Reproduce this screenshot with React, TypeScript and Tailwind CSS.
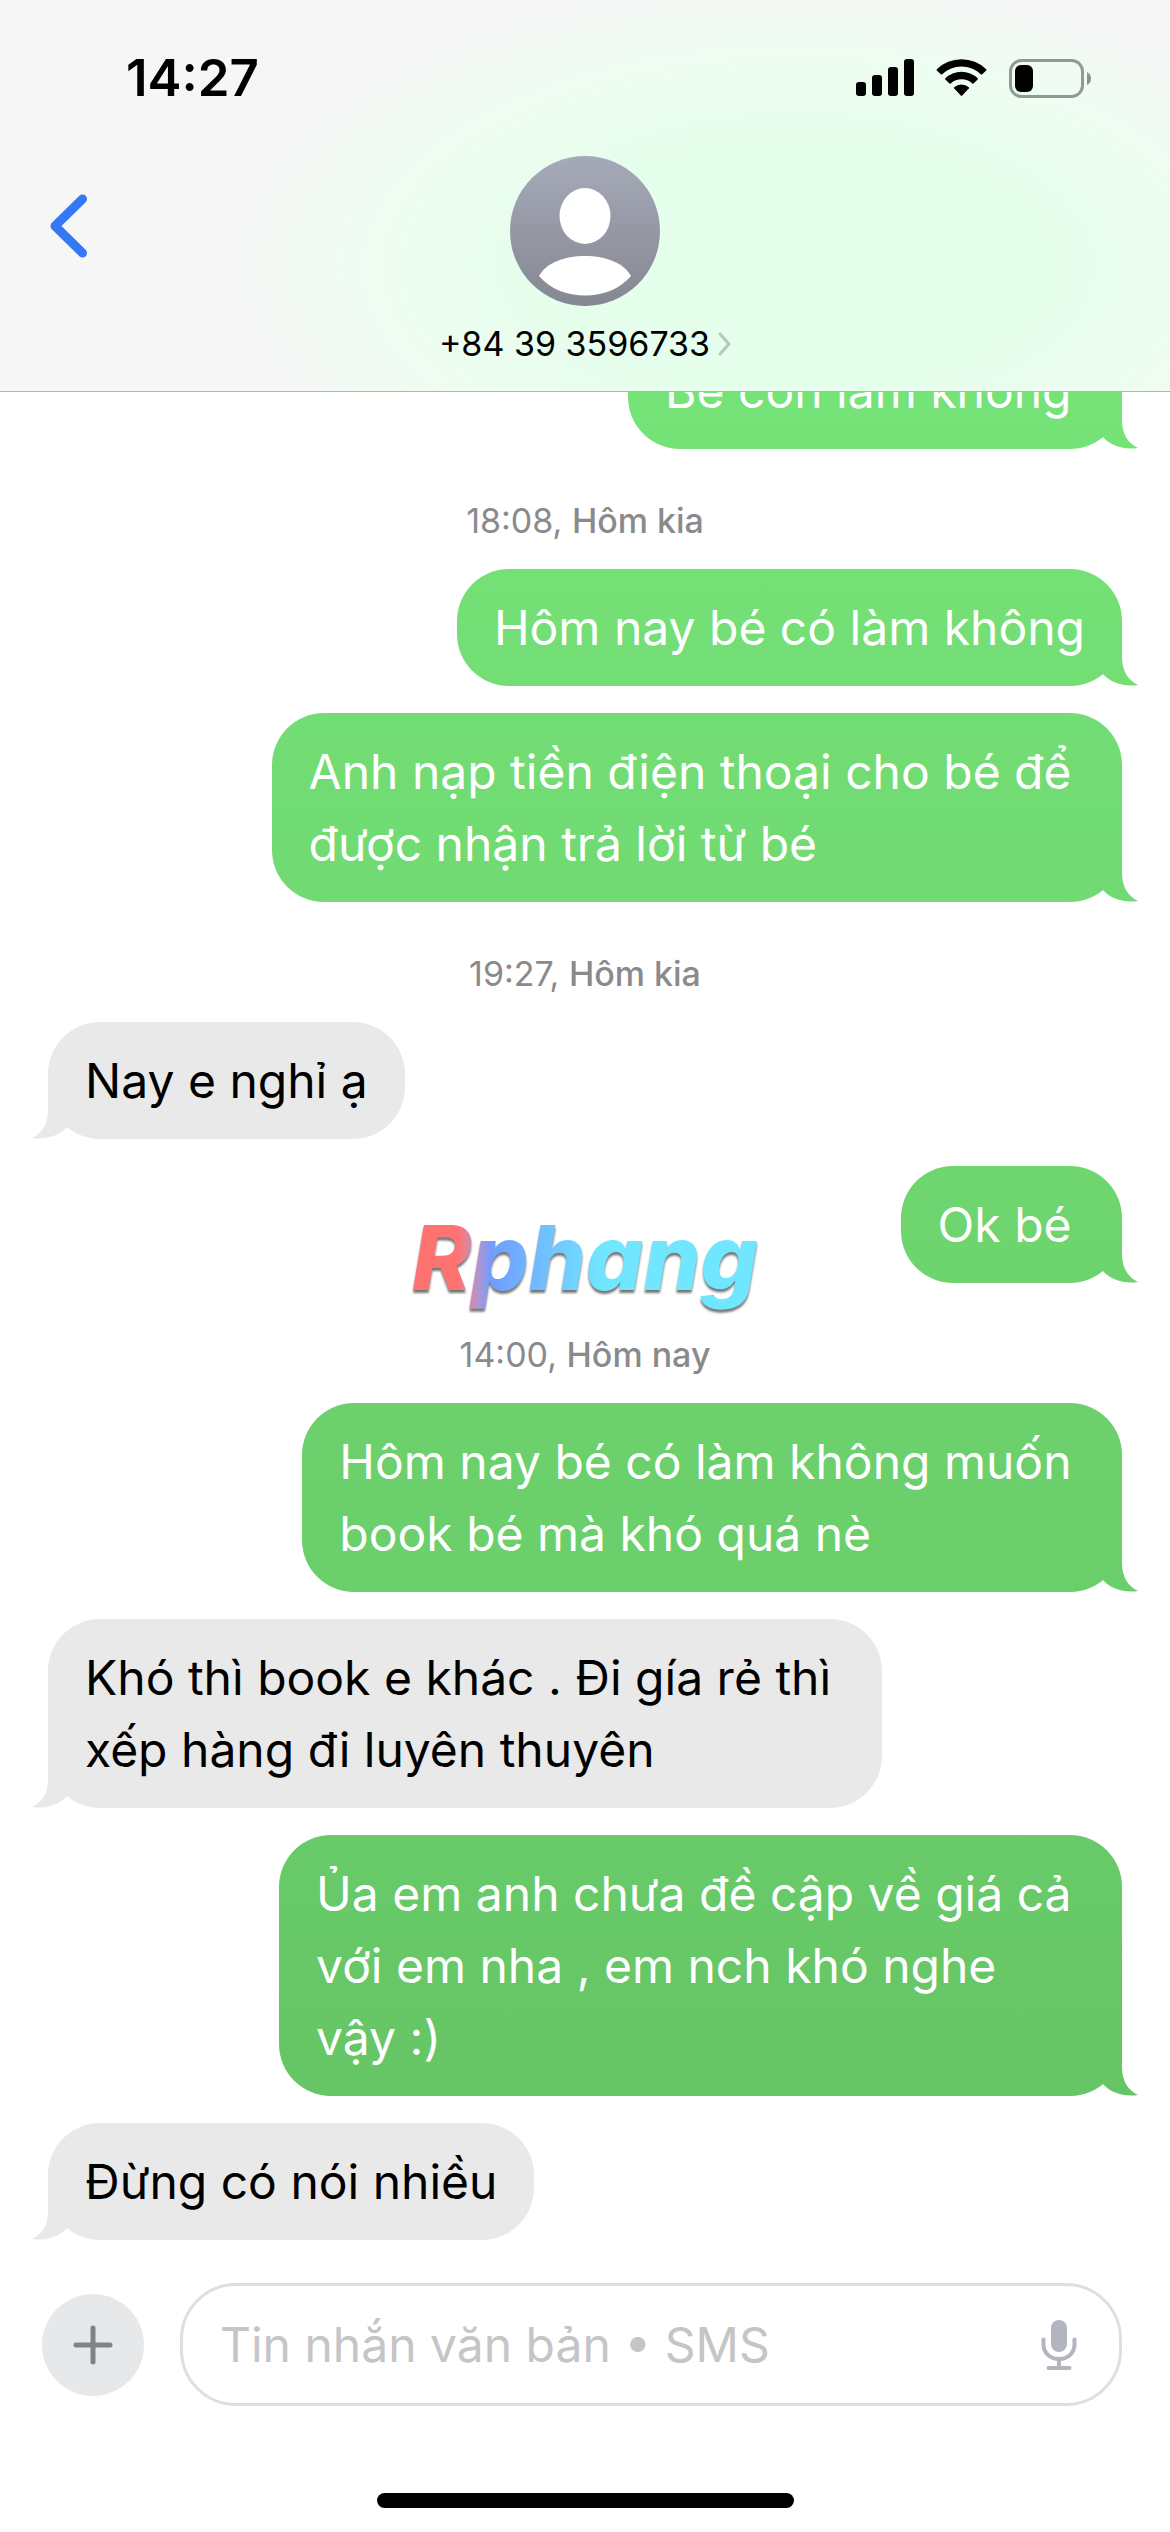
import { Fragment } from 'react';
import clsx from 'clsx';

type Item =
  | { kind: 'time'; time: string; day: string }
  | { kind: 'message'; from: 'me' | 'them'; text: string };

// Messages keep the trailing space and the line breaks they were sent with
const THREAD: Item[] = [
  { kind: 'message', from: 'me', text: 'Bé còn làm không ' },
  { kind: 'time', time: '18:08', day: 'Hôm kia' },
  { kind: 'message', from: 'me', text: 'Hôm nay bé có làm không' },
  { kind: 'message', from: 'me', text: 'Anh nạp tiền điện thoại cho bé để \nđược nhận trả lời từ bé' },
  { kind: 'time', time: '19:27', day: 'Hôm kia' },
  { kind: 'message', from: 'them', text: 'Nay e nghỉ ạ' },
  { kind: 'message', from: 'me', text: 'Ok bé ' },
  { kind: 'time', time: '14:00', day: 'Hôm nay' },
  { kind: 'message', from: 'me', text: 'Hôm nay bé có làm không muốn \nbook bé mà khó quá nè' },
  { kind: 'message', from: 'them', text: 'Khó thì book e khác . Đi gía rẻ thì \nxếp hàng đi luyên thuyên' },
  { kind: 'message', from: 'me', text: 'Ủa em anh chưa đề cập về giá cả \nvới em nha , em nch khó nghe\nvậy :)' },
  { kind: 'message', from: 'them', text: 'Đừng có nói nhiều' },
];

function StatusBar() {
  return (
    <div className="flex h-[60px] items-center justify-between pl-[126px] pr-[79px]">
      <span className="text-[51px] font-semibold leading-[60px]">14:27</span>
      <div className="flex items-center gap-[22px]">
        <svg width="58" height="38" viewBox="0 0 58 38" aria-label="Signal">
          <rect x="0" y="23" width="10" height="14" rx="3" />
          <rect x="16" y="16" width="10" height="21" rx="3" />
          <rect x="32" y="8" width="10" height="29" rx="3" />
          <rect x="48" y="0" width="10" height="37" rx="3" />
        </svg>
        <svg width="51" height="38" viewBox="0 0 51 38" aria-label="Wi-Fi">
          <path d="M0.8 10.2 A35.5 35.5 0 0 1 50.2 10.2 Q50.6 10.8 50.2 11.4 L46 15.4 Q45.4 15.8 44.8 15.3 A28 28 0 0 0 6.2 15.3 Q5.6 15.8 5 15.4 L0.8 11.4 Q0.4 10.8 0.8 10.2 Z" />
          <path d="M9.3 19.2 A23.5 23.5 0 0 1 41.7 19.2 Q42.1 19.8 41.7 20.4 L37.5 24.5 Q36.9 25 36.3 24.5 A16 16 0 0 0 14.7 24.5 Q14.1 25 13.5 24.5 L9.3 20.4 Q8.9 19.8 9.3 19.2 Z" />
          <path d="M18.2 28.2 A11.5 11.5 0 0 1 32.8 28.2 Q33.2 28.8 32.8 29.4 L26.2 36.6 Q25.5 37.2 24.8 36.6 L18.2 29.4 Q17.8 28.8 18.2 28.2 Z" />
        </svg>
        <svg width="82" height="39" viewBox="0 0 82 39" aria-label="Battery">
          <rect x="1.5" y="1.5" width="72" height="36" rx="11" fill="none" stroke="#919993" strokeWidth="3" />
          <rect x="6" y="6" width="18" height="27" rx="6" />
          <path d="M78 13 Q82 15 82 19.5 Q82 24 78 26 Z" fill="#8c948e" />
        </svg>
      </div>
    </div>
  );
}

function Avatar() {
  return (
    <svg width="150" height="150" viewBox="0 0 150 150" aria-hidden="true">
      <defs>
        <linearGradient id="avatar-fill" x1="0" y1="0" x2="0" y2="1">
          <stop offset="0" stopColor="#a6aab8" />
          <stop offset="1" stopColor="#858791" />
        </linearGradient>
      </defs>
      <circle cx="75" cy="75" r="75" fill="url(#avatar-fill)" />
      <ellipse cx="75" cy="60" rx="25.5" ry="28" fill="#fff" />
      <path d="M29 120 C36 107 54 100 75 100 C96 100 114 107 121 120 C110 133 93 139.500 75 139.500 C57 139.500 40 133 29 120 Z" fill="#fff" />
    </svg>
  );
}

function Header() {
  return (
    <header className="shrink-0 border-b border-[#b2b5b2] bg-[#f6f6f6] bg-[radial-gradient(ellipse_50%_76%_at_68%_68%,#e5feec_0%,#e6feec_45%,#eefdf1_70%,#f6f6f6_100%)] pb-[27px] pt-12">
      <StatusBar />
      <div className="mt-12 grid grid-cols-[1fr_auto_1fr] items-start">
        <button type="button" aria-label="Quay lại" className="mt-[38px] justify-self-start pl-12">
          <svg width="42" height="64" viewBox="0 0 42 64" fill="none" stroke="#3478f6" strokeWidth="9" strokeLinecap="round" strokeLinejoin="round">
            <path d="M34.500 5 L7 32 L34.500 59" />
          </svg>
        </button>
        <button type="button" className="flex flex-col items-center gap-[18px]">
          <Avatar />
          <span className="flex items-center gap-2 text-[34px] leading-10">
            +84 39 3596733
            <svg width="13" height="26" viewBox="0 0 13 26" fill="none" stroke="#b7c6bb" strokeWidth="3" strokeLinecap="round" strokeLinejoin="round">
              <path d="M2 3 L11 13 L2 23" />
            </svg>
          </span>
        </button>
      </div>
    </header>
  );
}

// The green runs over the whole window, so bubbles darken as they move down
const GREEN = 'bg-fixed bg-linear-to-b from-[#79ea7c] to-[#62be61]';
const GRAY = 'bg-[#e9e9e9]';

function Bubble({ from, text }: { from: 'me' | 'them'; text: string }) {
  const mine = from === 'me';
  const fill = mine ? GREEN : GRAY;
  return (
    <div
      className={clsx(
        'relative w-fit max-w-[84%] shrink-0 rounded-[52px] px-[37px] pb-[22px] pt-[23px]',
        fill,
        mine ? 'self-end text-white' : 'self-start text-black',
      )}
    >
      <p className="whitespace-break-spaces text-5xl leading-[72px]">{text}</p>
      <span
        className={clsx(
          'absolute bottom-0 h-14 w-[52px]',
          fill,
          mine
            ? "right-[-16px] [clip-path:path('M17_44_C25_53_38_57_52_55_C42_50_36_41_36_27_L36_0_L0_0_L6_30_Z')]"
            : "left-[-16px] [clip-path:path('M35_44_C27_53_14_57_0_55_C10_50_16_41_16_27_L16_0_L52_0_L46_30_Z')]",
        )}
      />
    </div>
  );
}

function Thread() {
  return (
    <main className="flex min-h-0 flex-1 flex-col justify-end overflow-hidden px-12">
      {THREAD.map((item, i) => {
        if (item.kind === 'time') {
          return (
            <p key={i} className="shrink-0 pb-[30px] pt-[54px] text-center text-[34px] leading-9 text-[#8a8a8d]">
              {item.time}, <span className="font-medium">{item.day}</span>
            </p>
          );
        }
        const afterMessage = i > 0 && THREAD[i - 1].kind === 'message';
        return (
          <Fragment key={i}>
            {afterMessage && <div className="h-[27px] shrink-0" />}
            <Bubble from={item.from} text={item.text} />
          </Fragment>
        );
      })}
    </main>
  );
}

function Composer() {
  return (
    <footer className="shrink-0 pb-6 pt-[43px]">
      <form className="flex items-center gap-9 pl-[42px] pr-12" onSubmit={(e) => e.preventDefault()}>
        <button type="button" aria-label="Thêm" className="flex size-[102px] shrink-0 items-center justify-center rounded-full bg-[#e6e8ea]">
          <svg width="40" height="40" viewBox="0 0 40 40" stroke="#808287" strokeWidth="5" strokeLinecap="round">
            <path d="M20 3 V37 M3 20 H37" />
          </svg>
        </button>
        <div className="flex h-[123px] min-w-0 flex-1 items-center rounded-[56px] border-[3px] border-[#dfdfdf] pl-[37px] pr-[42px]">
          <input
            type="text"
            aria-label="Tin nhắn văn bản"
            placeholder="Tin nhắn văn bản • SMS"
            className="h-[72px] min-w-0 flex-1 bg-transparent text-5xl leading-[72px] outline-none placeholder:text-[#c5c5c5]"
          />
          <button type="button" aria-label="Đọc chính tả">
            <svg width="36" height="50" viewBox="0 0 36 50" fill="none" stroke="#b2b5be" strokeWidth="4" strokeLinecap="round">
              <rect x="10" y="0" width="16" height="32" rx="8" fill="#b2b5be" stroke="none" />
              <path d="M2.500 19.500 V24 C2.500 33 9 39 18 39 C27 39 33.500 33 33.500 24 V19.500" />
              <path d="M18 39 V47 M7.500 48 H28.500" />
            </svg>
          </button>
        </div>
      </form>
      <div className="mx-auto mt-[87px] h-[15px] w-[417px] rounded-full bg-black" />
    </footer>
  );
}

export default function App() {
  return (
    <div className="relative flex h-screen flex-col bg-white font-[Inter,'Liberation_Sans',sans-serif] text-black">
      <Header />
      <Thread />
      <Composer />
      {/* Watermark in the middle of the screen */}
      <div className="pointer-events-none absolute left-1/2 top-1/2 -translate-x-1/2 -translate-y-1/2 pb-4 drop-shadow-[0_3px_1px_#777777]">
        <span className="block bg-linear-to-r from-[#ff7272] from-15% via-[#709cff] via-24% to-[#70e6ff] to-55% bg-clip-text px-2 text-[90px] font-extrabold italic leading-[110px] text-transparent">
          Rphang
        </span>
      </div>
    </div>
  );
}
